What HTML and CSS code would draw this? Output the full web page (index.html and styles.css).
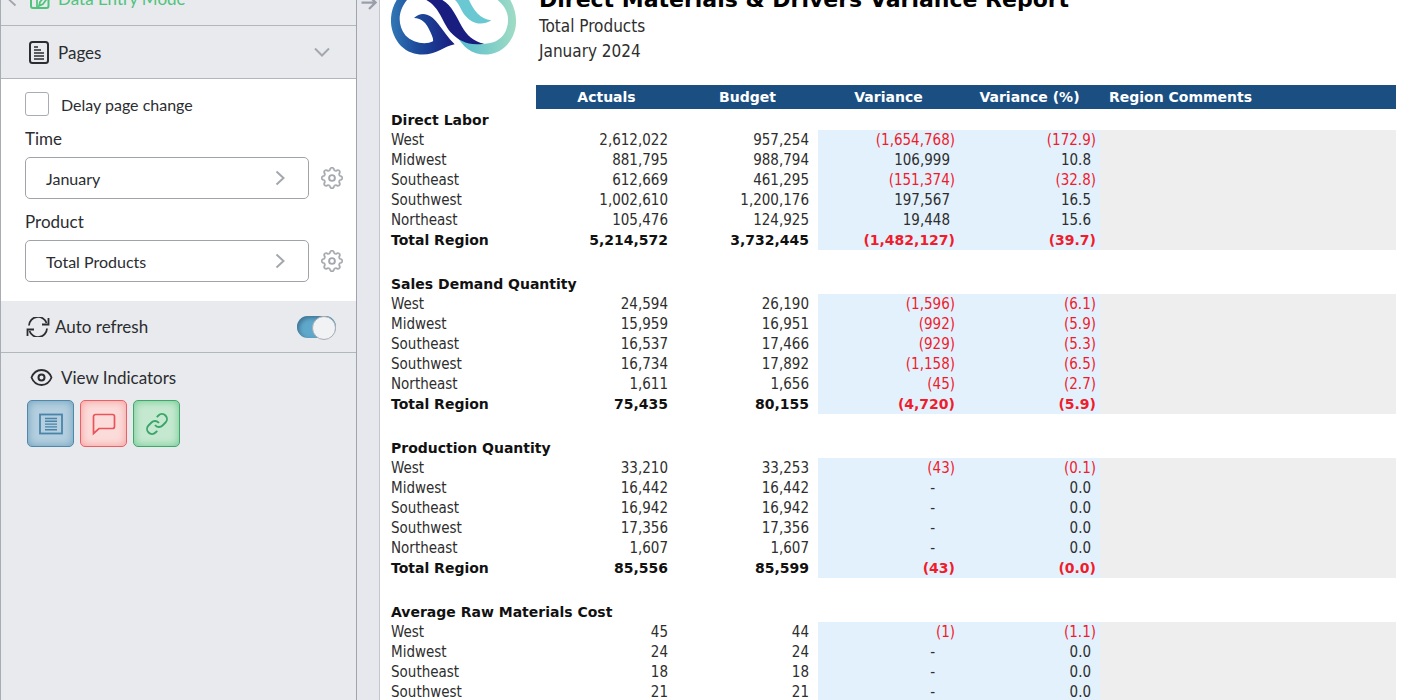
FILE: index.html
```html
<!DOCTYPE html>
<html lang="en">
<head>
    <meta charset="UTF-8">
    <meta name="viewport" content="width=device-width, initial-scale=1.0">
    <title>Direct Materials &amp; Drivers Variance Report</title>
    <link rel="stylesheet" href="styles.css">
</head>
<body>

<svg class="symbols" aria-hidden="true">
    <symbol id="gear" viewBox="0 0 16 16">
        <path d="M9.796 1.343c-.527-1.79-3.065-1.79-3.592 0l-.094.319a.873.873 0 0 1-1.255.52l-.292-.16c-1.64-.892-3.433.902-2.54 2.541l.159.292a.873.873 0 0 1-.52 1.255l-.319.094c-1.79.527-1.79 3.065 0 3.592l.319.094a.873.873 0 0 1 .52 1.255l-.16.292c-.892 1.64.901 3.434 2.541 2.54l.292-.159a.873.873 0 0 1 1.255.52l.094.319c.527 1.79 3.065 1.79 3.592 0l.094-.319a.873.873 0 0 1 1.255-.52l.292.16c1.64.893 3.434-.902 2.54-2.541l-.159-.292a.873.873 0 0 1 .52-1.255l.319-.094c1.79-.527 1.79-3.065 0-3.592l-.319-.094a.873.873 0 0 1-.52-1.255l.16-.292c.893-1.64-.902-3.433-2.541-2.54l-.292.159a.873.873 0 0 1-1.255-.52l-.094-.319zm-2.633.283c.246-.835 1.428-.835 1.674 0l.094.319a1.873 1.873 0 0 0 2.693 1.115l.291-.16c.764-.415 1.6.42 1.184 1.185l-.159.292a1.873 1.873 0 0 0 1.116 2.692l.318.094c.835.246.835 1.428 0 1.674l-.319.094a1.873 1.873 0 0 0-1.115 2.693l.16.291c.415.764-.42 1.6-1.185 1.184l-.291-.159a1.873 1.873 0 0 0-2.693 1.116l-.094.318c-.246.835-1.428.835-1.674 0l-.094-.319a1.873 1.873 0 0 0-2.692-1.115l-.292.16c-.764.415-1.6-.42-1.184-1.185l.159-.291A1.873 1.873 0 0 0 1.945 8.93l-.319-.094c-.835-.246-.835-1.428 0-1.674l.319-.094A1.873 1.873 0 0 0 3.06 4.377l-.16-.292c-.415-.764.42-1.6 1.185-1.184l.292.159a1.873 1.873 0 0 0 2.692-1.115l.094-.319z" fill="currentColor" stroke="currentColor" stroke-width=".3"/>
        <circle cx="8" cy="8" r="2.1" fill="none" stroke="currentColor" stroke-width="1.4"/>
    </symbol>
    <symbol id="chevron" viewBox="0 0 10 16">
        <path d="M1.5 1.5L8.5 8l-7 6.5" fill="none" stroke="currentColor" stroke-width="2"/>
    </symbol>
</svg>

<div class="app">
    <aside class="sidebar">
        <button class="panel-row mode-row" type="button">
            <svg class="back-icon" viewBox="0 0 10 16"><path d="M8.5 1.5L1.5 8l7 6.5" fill="none" stroke="currentColor" stroke-width="1.8"/></svg>
            <svg class="mode-icon" viewBox="0 0 20 20"><rect x="1" y="1" width="17.500" height="18" rx="2" fill="none" stroke="currentColor" stroke-width="2"/><path d="M1 8h6M7 1v17M16 6l-6 7-1 4 4-2 6-8z" fill="none" stroke="currentColor" stroke-width="1.7"/></svg>
            Data Entry Mode
        </button>

        <button class="panel-row pages-row" type="button">
            <svg class="pages-icon" viewBox="0 0 20 23"><rect x="1" y="1" width="18" height="21" rx="2.5" fill="none" stroke="currentColor" stroke-width="2"/><path d="M5 6h4M5 9h7M5 12h10M5 15h10M5 18h10" stroke="currentColor" stroke-width="1.6"/></svg>
            <span class="row-label">Pages</span>
            <svg class="down-icon" viewBox="0 0 16 10"><path d="M1 1.5L8 8.5l7-7" fill="none" stroke="currentColor" stroke-width="2"/></svg>
        </button>

        <div class="pages-panel">
            <label class="delay"><input class="delay-box" type="checkbox">Delay page change</label>

            <div class="field">
                <label class="field-label" for="timePicker">Time</label>
                <div class="field-line">
                    <button class="picker" id="timePicker" type="button">January<svg class="picker-arrow"><use href="#chevron"/></svg></button>
                    <button class="gear-button" type="button" aria-label="Time settings"><svg class="gear"><use href="#gear"/></svg></button>
                </div>
            </div>

            <div class="field">
                <label class="field-label" for="productPicker">Product</label>
                <div class="field-line">
                    <button class="picker" id="productPicker" type="button">Total Products<svg class="picker-arrow"><use href="#chevron"/></svg></button>
                    <button class="gear-button" type="button" aria-label="Product settings"><svg class="gear"><use href="#gear"/></svg></button>
                </div>
            </div>
        </div>

        <div class="panel-row refresh-row">
            <svg class="refresh-icon" viewBox="0 0 24 20"><path d="M3 8.5A9 9 0 0 1 20.500 6M21 11.5A9 9 0 0 1 3.500 14" fill="none" stroke="currentColor" stroke-width="1.8"/><path d="M22.5 1v6.500H16M1.5 19v-6.500H8" fill="none" stroke="currentColor" stroke-width="1.8"/></svg>
            <label class="row-label" for="autoRefresh">Auto refresh</label>
            <input class="switch" id="autoRefresh" type="checkbox" role="switch" checked>
        </div>

        <div class="indicators">
            <div class="indicators-title">
                <svg class="eye-icon" viewBox="0 0 22 17"><path d="M1 8.5C5-1.5 17-1.5 21 8.5 17 18.5 5 18.5 1 8.5z" fill="none" stroke="currentColor" stroke-width="1.8"/><circle cx="11" cy="8.5" r="3" fill="none" stroke="currentColor" stroke-width="2"/></svg>
                View Indicators
            </div>
            <div class="indicator-buttons">
                <button class="indicator blue" type="button" aria-label="Lists">
                    <svg class="indicator-icon" viewBox="0 0 24 24"><rect x="1" y="2.5" width="22" height="19" fill="none" stroke="currentColor" stroke-width="1.8"/><path d="M6 6.5h12M6 9.3h12M6 12.1h12M6 14.9h12M6 17.7h12" stroke="currentColor" stroke-width="1.4"/></svg>
                </button>
                <button class="indicator red" type="button" aria-label="Comments">
                    <svg class="indicator-icon" viewBox="0 0 24 24"><path d="M1.5 21.5V4.5a2 2 0 0 1 2-2h17a2 2 0 0 1 2 2v10a2 2 0 0 1-2 2H7z" fill="none" stroke="currentColor" stroke-width="1.7"/></svg>
                </button>
                <button class="indicator green" type="button" aria-label="Links">
                    <svg class="indicator-icon" viewBox="0 0 24 24"><path d="M10 13a5 5 0 0 0 7.54.54l3-3a5 5 0 0 0-7.07-7.07l-1.72 1.71M14 11a5 5 0 0 0-7.54-.54l-3 3a5 5 0 0 0 7.07 7.07l1.71-1.71" fill="none" stroke="currentColor" stroke-width="1.9"/></svg>
                </button>
            </div>
        </div>
    </aside>

    <div class="gutter">
        <button class="collapse" type="button" aria-label="Move panel"><svg class="collapse-icon" viewBox="0 0 16 16"><path d="M0 8h14M8 1l7 7-7 7" fill="none" stroke="currentColor" stroke-width="2.400"/></svg></button>
    </div>

    <main class="report">
        <header class="report-header">
            <svg class="logo" viewBox="120 0 378 165" aria-hidden="true">
                <defs>
                    <linearGradient id="blue" x1="0" y1="0" x2="1" y2="0"><stop offset="0" stop-color="#3277b5"/><stop offset=".4" stop-color="#1d4c9c"/><stop offset="1" stop-color="#191d80"/></linearGradient>
                    <linearGradient id="teal" x1="0" y1="0" x2="1" y2="0"><stop offset="0" stop-color="#4fb9cf"/><stop offset="1" stop-color="#a0dcc4"/></linearGradient>
                </defs>
                <path d="M137 0C110 45 115 100 150 138C185 172 235 168 268 150C282 143 296 136 311 133C290 113 278 92 260 70C240 42 212 32 189 54C212 54 226 70 234 88C242 104 248 116 246 124C225 136 185 130 163 106C140 76 139 35 168 0z" fill="url(#blue)"/>
                <path d="M478 0C503 45 502 95 468 135C435 170 385 172 350 147C325 128 315 100 305 80C335 115 360 130 397 131C430 133 460 115 468 82C477 50 467 22 440 0z" fill="url(#teal)"/>
                <path d="M226 0H274C302 15 318 54 333 80C347 105 367 124 399 131C355 138 325 125 298 96C273 65 266 22 226 0z" fill="#191d80"/>
                <path d="M312 0H354C368 31 386 57 421 61C390 80 360 69 341 45C329 29 325 12 312 0z" fill="#69c8d2"/>
            </svg>
            <div class="titles">
                <h1 class="title">Direct Materials &amp; Drivers Variance Report</h1>
                <p class="subtitle">Total Products</p>
                <p class="subtitle">January 2024</p>
            </div>
        </header>

        <table class="grid">
            <colgroup>
                <col class="col-name">
                <col class="col-number">
                <col class="col-number">
                <col class="col-number">
                <col class="col-number">
                <col>
            </colgroup>
            <thead>
                <tr><td></td><th>Actuals</th><th>Budget</th><th>Variance</th><th>Variance (%)</th><th class="comments-head">Region Comments</th></tr>
            </thead>
            <tbody>
                <tr class="section"><th colspan="6">Direct Labor</th></tr>
                <tr><th>West</th><td>2,612,022</td><td>957,254</td><td class="var neg">(1,654,768)</td><td class="var neg">(172.9)</td><td class="note"></td></tr>
                <tr><th>Midwest</th><td>881,795</td><td>988,794</td><td class="var">106,999</td><td class="var">10.8</td><td class="note"></td></tr>
                <tr><th>Southeast</th><td>612,669</td><td>461,295</td><td class="var neg">(151,374)</td><td class="var neg">(32.8)</td><td class="note"></td></tr>
                <tr><th>Southwest</th><td>1,002,610</td><td>1,200,176</td><td class="var">197,567</td><td class="var">16.5</td><td class="note"></td></tr>
                <tr><th>Northeast</th><td>105,476</td><td>124,925</td><td class="var">19,448</td><td class="var">15.6</td><td class="note"></td></tr>
                <tr class="total"><th>Total Region</th><td>5,214,572</td><td>3,732,445</td><td class="var neg">(1,482,127)</td><td class="var neg">(39.7)</td><td class="note"></td></tr>
            </tbody>
            <tbody>
                <tr class="spacer"><td colspan="6"></td></tr>
                <tr class="section"><th colspan="6">Sales Demand Quantity</th></tr>
                <tr><th>West</th><td>24,594</td><td>26,190</td><td class="var neg">(1,596)</td><td class="var neg">(6.1)</td><td class="note"></td></tr>
                <tr><th>Midwest</th><td>15,959</td><td>16,951</td><td class="var neg">(992)</td><td class="var neg">(5.9)</td><td class="note"></td></tr>
                <tr><th>Southeast</th><td>16,537</td><td>17,466</td><td class="var neg">(929)</td><td class="var neg">(5.3)</td><td class="note"></td></tr>
                <tr><th>Southwest</th><td>16,734</td><td>17,892</td><td class="var neg">(1,158)</td><td class="var neg">(6.5)</td><td class="note"></td></tr>
                <tr><th>Northeast</th><td>1,611</td><td>1,656</td><td class="var neg">(45)</td><td class="var neg">(2.7)</td><td class="note"></td></tr>
                <tr class="total"><th>Total Region</th><td>75,435</td><td>80,155</td><td class="var neg">(4,720)</td><td class="var neg">(5.9)</td><td class="note"></td></tr>
            </tbody>
            <tbody>
                <tr class="spacer"><td colspan="6"></td></tr>
                <tr class="section"><th colspan="6">Production Quantity</th></tr>
                <tr><th>West</th><td>33,210</td><td>33,253</td><td class="var neg">(43)</td><td class="var neg">(0.1)</td><td class="note"></td></tr>
                <tr><th>Midwest</th><td>16,442</td><td>16,442</td><td class="var zero">-</td><td class="var">0.0</td><td class="note"></td></tr>
                <tr><th>Southeast</th><td>16,942</td><td>16,942</td><td class="var zero">-</td><td class="var">0.0</td><td class="note"></td></tr>
                <tr><th>Southwest</th><td>17,356</td><td>17,356</td><td class="var zero">-</td><td class="var">0.0</td><td class="note"></td></tr>
                <tr><th>Northeast</th><td>1,607</td><td>1,607</td><td class="var zero">-</td><td class="var">0.0</td><td class="note"></td></tr>
                <tr class="total"><th>Total Region</th><td>85,556</td><td>85,599</td><td class="var neg">(43)</td><td class="var neg">(0.0)</td><td class="note"></td></tr>
            </tbody>
            <tbody>
                <tr class="spacer"><td colspan="6"></td></tr>
                <tr class="section"><th colspan="6">Average Raw Materials Cost</th></tr>
                <tr><th>West</th><td>45</td><td>44</td><td class="var neg">(1)</td><td class="var neg">(1.1)</td><td class="note"></td></tr>
                <tr><th>Midwest</th><td>24</td><td>24</td><td class="var zero">-</td><td class="var">0.0</td><td class="note"></td></tr>
                <tr><th>Southeast</th><td>18</td><td>18</td><td class="var zero">-</td><td class="var">0.0</td><td class="note"></td></tr>
                <tr><th>Southwest</th><td>21</td><td>21</td><td class="var zero">-</td><td class="var">0.0</td><td class="note"></td></tr>
            </tbody>
        </table>
    </main>
</div>

</body>
</html>
```

FILE: styles.css
```css
* {
    box-sizing: border-box;
}

body {
    margin: 0;
    height: 100vh;
    overflow: hidden;
    background: #fff;
    color: #2b2d31;
    font-family: Lato, sans-serif;
    font-size: 17px;
}

button {
    padding: 0;
    border: none;
    background: none;
    color: inherit;
    font: inherit;
    cursor: pointer;
}

svg {
    display: block;
    flex-shrink: 0;
}

.symbols {
    display: none;
}

.app {
    display: flex;
    height: 100vh;
}

/* Sidebar */
.sidebar {
    width: 357px;
    flex-shrink: 0;
    background: #e8eaed;
    border-left: 1px solid #a9adb3;
    border-right: 1px solid #a0a4ac;
}

.panel-row {
    display: flex;
    align-items: center;
    width: 100%;
    border-bottom: 1px solid #b2b7bc;
    text-align: left;
}

/* The panel is scrolled: only the lower half of this row shows */
.mode-row {
    height: 54px;
    margin-top: -28px;
    padding-left: 6px;
    color: #4fc37b;
}

.back-icon {
    width: 10px;
    height: 16px;
    margin-right: 13px;
    color: #a0a4aa;
}

.mode-icon {
    width: 20px;
    height: 20px;
    margin-right: 8px;
}

.pages-row {
    height: 53px;
    padding: 0 26px 0 28px;
}

.pages-icon {
    width: 20px;
    height: 23px;
    margin-right: 9px;
}

.row-label {
    flex: 1;
}

.down-icon {
    width: 16px;
    height: 10px;
    color: #a4a8ae;
}

.pages-panel {
    padding: 13px 12px 19px 24px;
    background: #fff;
}

.delay {
    display: flex;
    align-items: center;
    gap: 12px;
    height: 24px;
    font-size: 16px;
}

.delay-box {
    appearance: none;
    width: 24px;
    height: 24px;
    margin: 0;
    border: 1px solid #a9adb3;
    border-radius: 3px;
    background: #fff;
}

.field {
    padding-top: 11px;
}

.field-label {
    display: block;
    height: 30px;
    line-height: 24px;
}

.field-line {
    display: flex;
    align-items: center;
    gap: 12px;
    padding-right: 1px;
}

.picker {
    display: flex;
    flex: 1;
    align-items: center;
    justify-content: space-between;
    height: 42px;
    padding: 0 23px 0 20px;
    border: 1px solid #a0a4aa;
    border-radius: 5px;
    font-size: 16px;
}

.picker-arrow {
    width: 10px;
    height: 16px;
    color: #a4a8ae;
}

.gear {
    width: 22px;
    height: 22px;
    color: #a4a8ae;
}

.refresh-row {
    height: 52px;
    padding: 0 20px 0 25px;
}

.refresh-icon {
    width: 24px;
    height: 20px;
    margin-right: 5px;
}

.switch {
    appearance: none;
    display: flex;
    justify-content: flex-end;
    width: 39px;
    height: 22px;
    margin: 0;
    border-radius: 11px;
    background: #5fa8cb;
    box-shadow: inset 2px 2px 4px #3f7392;
}

.switch::before {
    content: "";
    width: 22px;
    height: 22px;
    border: 1px solid #a9adb3;
    border-radius: 50%;
    background: #f0f2f4;
}

.indicators {
    padding: 12px 26px;
}

.indicators-title {
    display: flex;
    align-items: center;
    gap: 8px;
    height: 24px;
    padding-left: 3px;
}

.eye-icon {
    width: 23px;
    height: 17px;
}

.indicator-buttons {
    display: flex;
    gap: 6px;
    padding-top: 11px;
}

.indicator {
    display: flex;
    align-items: center;
    justify-content: center;
    width: 47px;
    height: 47px;
    border: 1px solid;
    border-radius: 5px;
}

.indicator-icon {
    width: 24px;
    height: 24px;
}

.blue {
    background: #b4cfdf;
    border-color: #4f88ab;
    box-shadow: inset 0 0 9px #6d9fbd;
    color: #4a84a8;
}

.red {
    background: #fbdcda;
    border-color: #ec5f66;
    box-shadow: inset 0 0 9px #f59a98;
    color: #ea5359;
}

.green {
    background: #c5e9d0;
    border-color: #3fa76a;
    box-shadow: inset 0 0 9px #6cc78e;
    color: #3ba568;
}

.gutter {
    width: 23px;
    flex-shrink: 0;
    background: #e6e8ed;
    border-right: 1px solid #c3c6cf;
}

.collapse {
    display: block;
    margin: -5px 0 0 4px;
    color: #9a9ea8;
}

.collapse-icon {
    width: 16px;
    height: 15px;
}

/* Report */
.report {
    flex: 1;
    min-width: 0;
    padding: 0 24px 0 11px;
    color: #2e2e2e;
    font-family: "DejaVu Sans Condensed", "DejaVu Sans", sans-serif;
    font-size: 15px;
}

.report-header {
    display: flex;
    align-items: flex-start;
    gap: 22px;
    height: 85px;
}

.logo {
    width: 126px;
    height: 55px;
}

.titles {
    margin-top: -14px;
}

.title {
    margin: 0;
    color: #000;
    font-family: "DejaVu Sans", sans-serif;
    font-size: 22px;
    line-height: 28px;
}

.subtitle {
    margin: 0;
    font-size: 17px;
    line-height: 25px;
}

.grid {
    width: 100%;
    border-collapse: collapse;
    table-layout: fixed;
}

.col-name {
    width: 145px;
}

.col-number {
    width: 141px;
}

.grid th,
.grid td {
    height: 20px;
    padding: 0;
    line-height: 20px;
    white-space: nowrap;
}

.grid tbody th {
    font-weight: 400;
    text-align: left;
}

.grid tbody td {
    padding-right: 9px;
    text-align: right;
}

.grid thead th {
    height: 24px;
    background: #1b4f82;
    color: #fff;
    font-family: "DejaVu Sans", sans-serif;
    font-size: 14px;
}

.grid thead .comments-head {
    padding-left: 9px;
    text-align: left;
}

.grid .section th,
.grid .total th,
.grid .total td {
    color: #111;
    font-family: "DejaVu Sans", sans-serif;
    font-size: 14px;
    font-weight: 700;
}

.grid .section th {
    height: 21px;
}

.grid .spacer td {
    height: 23px;
}

.grid tbody .var {
    background: #e3f1fd;
}

.grid tbody .neg {
    padding-right: 4px;
    color: #f01c2c;
}

.grid tbody .zero {
    padding-right: 24px;
}

.note {
    background: #eee;
}
```
